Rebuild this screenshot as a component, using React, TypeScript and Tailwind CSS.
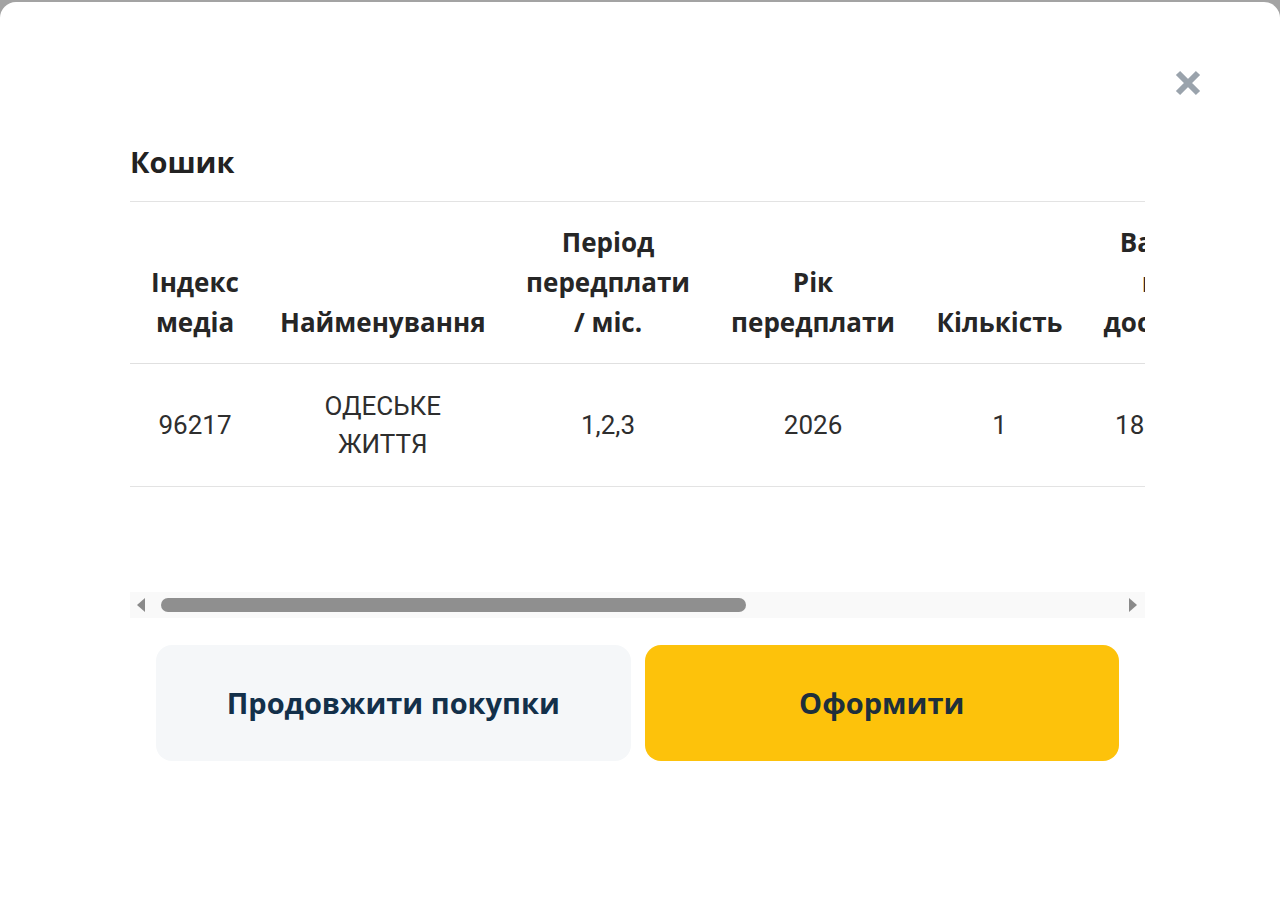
import React from "react";

const headers: string[][] = [
  ["Індекс", "медіа"],
  ["Найменування"],
  ["Період", "передплати", "/ міс."],
  ["Рік", "передплати"],
  ["Кількість"],
  ["Вартість", "міс. з", "доставкою"],
];

const widths = ["w-[130px]", "w-[245px]", "w-[205px]", "w-[205px]", "w-[168px]", "w-[180px]"];

const row: string[][] = [["96217"], ["ОДЕСЬКЕ", "ЖИТТЯ"], ["1,2,3"], ["2026"], ["1"], ["180,00 грн"]];

const bold = { fontFamily: "'Open Sans', Roboto, sans-serif" };

export default function App() {
  return (
    <div className="min-h-screen bg-[#a3a3a3] pt-[2px]" style={{ fontFamily: "Roboto, 'Noto Sans', sans-serif" }}>
      <div className="relative h-[916px] rounded-t-[16px] bg-white">
        <button className="absolute right-[78px] top-[67px] flex h-[28px] w-[28px] items-center justify-center" aria-label="close">
          <svg width="28" height="28" viewBox="0 0 28 28">
            <path d="M4 4 L24 24 M24 4 L4 24" stroke="#9aa3ac" strokeWidth="6" strokeLinecap="butt" />
          </svg>
        </button>
        <div className="pl-[130px] pr-[135px] pt-[142px]">
          <h2 className="text-[29px] font-bold leading-[36px] text-[#222222]" style={bold}>Кошик</h2>
          <div className="mt-[21px] overflow-hidden border-t border-[#e3e3e3]">
            <table className="w-max border-collapse table-fixed">
              <thead>
                <tr className="border-b border-[#e0e0e0]">
                  {headers.map((lines, i) => (
                    <th
                      key={i}
                      className={`${widths[i]} px-[20px] pt-[20px] pb-[21px] align-bottom text-center text-[26px] font-bold leading-[40px] text-[#262626]`}
                      style={bold}
                    >
                      {lines.map((l, j) => (
                        <div key={j} className="whitespace-nowrap">{l}</div>
                      ))}
                    </th>
                  ))}
                </tr>
              </thead>
              <tbody>
                <tr className="border-b border-[#e3e3e3]">
                  {row.map((lines, i) => (
                    <td key={i} className="px-[20px] py-[23px] text-center align-middle text-[26px] leading-[38px] text-[#2e2e2e]">
                      {lines.map((l, j) => (
                        <div key={j} className="whitespace-nowrap">{l}</div>
                      ))}
                    </td>
                  ))}
                </tr>
              </tbody>
            </table>
          </div>
          <div className="mt-[105px] flex h-[26px] items-center bg-[#f9f9f9]">
            <div className="ml-[7px] h-0 w-0 border-y-[7px] border-r-[8px] border-y-transparent border-r-[#8a8a8a]" />
            <div className="ml-[16px] h-[14px] w-[585px] rounded-full bg-[#8f8f8f]" />
            <div className="ml-auto mr-[8px] h-0 w-0 border-y-[7px] border-l-[8px] border-y-transparent border-l-[#8a8a8a]" />
          </div>
          <div className="mt-[27px] flex gap-[14px] px-[26px]">
            <button className="flex h-[116px] flex-1 items-center justify-center rounded-[16px] bg-[#f5f7f9] text-[29px] font-bold text-[#13304a]" style={bold}>
              Продовжити покупки
            </button>
            <button className="flex h-[116px] flex-1 items-center justify-center rounded-[16px] bg-[#fdc20b] text-[29px] font-bold text-[#1d2f3b]" style={bold}>
              Оформити
            </button>
          </div>
        </div>
      </div>
    </div>
  );
}
